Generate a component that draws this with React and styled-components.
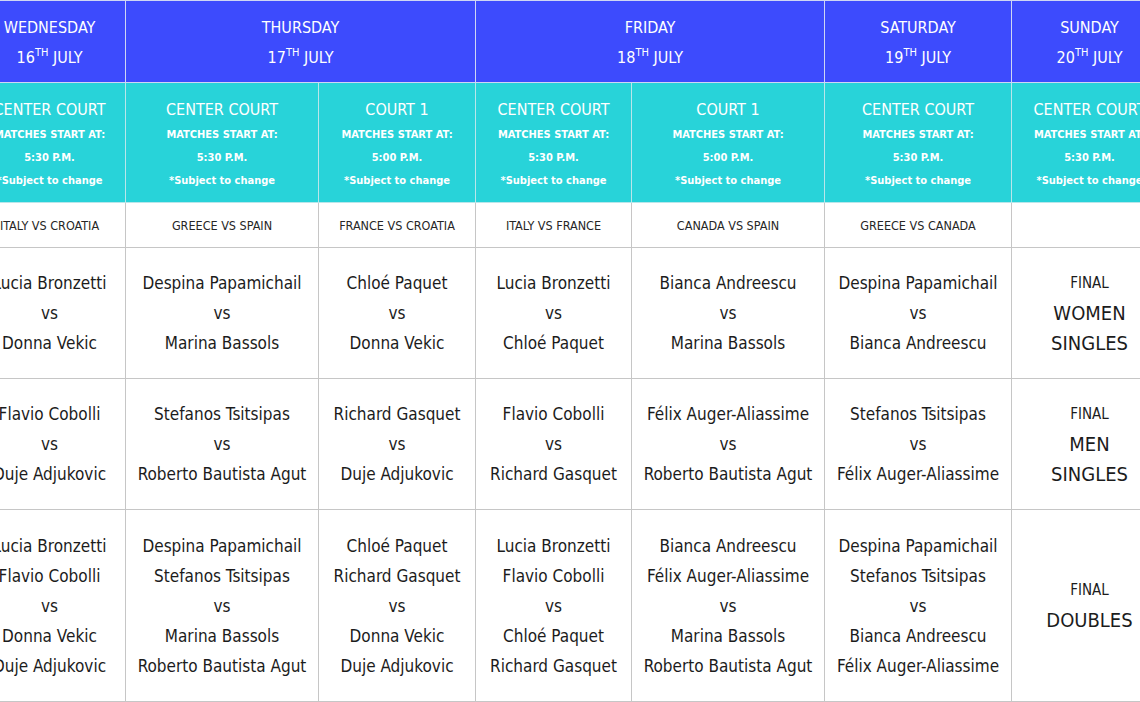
import React from "react";
import styled, { createGlobalStyle } from "styled-components";

const GlobalStyle = createGlobalStyle`
  html, body {
    margin: 0;
    padding: 0;
    background: #ffffff;
    overflow: hidden;
  }
  body {
    font-family: "Liberation Sans Narrow", "Arial Narrow", "DejaVu Sans Condensed", "Liberation Sans", sans-serif;
    font-stretch: condensed;
  }
`;

const Viewport = styled.div`
  width: 1140px;
  height: 702px;
  overflow: hidden;
`;

const Table = styled.table`
  margin-left: -27px;
  width: 1194px;
  table-layout: fixed;
  border-collapse: collapse;
  text-align: center;
`;

const Cell = styled.td`
  border: 1px solid #c6c6c6;
  padding: 0;
  vertical-align: middle;
  text-align: center;
`;

const DayCell = styled(Cell)`
  height: 79px;
  padding-top: 2px;
  background: #3d4bfd;
  color: #ffffff;
  border-color: #cfd6f4;
  font-size: 16px;
  line-height: 30px;
`;

const Sup = styled.sup`
  font-size: 11px;
  line-height: 0;
  vertical-align: 7px;
`;

const CourtCell = styled(Cell)`
  height: 115px;
  padding-top: 4px;
  background: #28d3d9;
  color: #ffffff;
  border-color: #b9e6ea;
`;

const CourtName = styled.div`
  font-size: 16px;
  line-height: 26px;
`;

const CourtNote = styled.div`
  font-size: 11px;
  line-height: 23px;
  font-weight: 700;
`;

const CountryCell = styled(Cell)`
  height: 44px;
  color: #262626;
  font-size: 12.5px;
  border-top-color: #b9e6ea;
`;

const MatchCell = styled(Cell)`
  height: ${(p) => p.$h}px;
  color: #1c1c1c;
  font-size: 17px;
  line-height: 30px;
`;

const FinalLabel = styled.div`
  font-size: 15px;
  line-height: 29px;
`;

const FinalTitle = styled.div`
  font-size: 20px;
  line-height: 30px;
`;

const widths = [152, 193, 157, 156, 193, 187, 156];

const days = [
  { name: "WEDNESDAY", num: 16, span: 1 },
  { name: "THURSDAY", num: 17, span: 2 },
  { name: "FRIDAY", num: 18, span: 2 },
  { name: "SATURDAY", num: 19, span: 1 },
  { name: "SUNDAY", num: 20, span: 1 },
];

const courts = [
  ["CENTER COURT", "5:30 P.M."],
  ["CENTER COURT", "5:30 P.M."],
  ["COURT 1", "5:00 P.M."],
  ["CENTER COURT", "5:30 P.M."],
  ["COURT 1", "5:00 P.M."],
  ["CENTER COURT", "5:30 P.M."],
  ["CENTER COURT", "5:30 P.M."],
];

const countries = [
  "ITALY VS CROATIA",
  "GREECE VS SPAIN",
  "FRANCE VS CROATIA",
  "ITALY VS FRANCE",
  "CANADA VS SPAIN",
  "GREECE VS CANADA",
  "",
];

const rows = [
  {
    h: 130,
    final: ["WOMEN", "SINGLES"],
    matches: [
      [["Lucia Bronzetti"], ["Donna Vekic"]],
      [["Despina Papamichail"], ["Marina Bassols"]],
      [["Chloé Paquet"], ["Donna Vekic"]],
      [["Lucia Bronzetti"], ["Chloé Paquet"]],
      [["Bianca Andreescu"], ["Marina Bassols"]],
      [["Despina Papamichail"], ["Bianca Andreescu"]],
    ],
  },
  {
    h: 130,
    final: ["MEN", "SINGLES"],
    matches: [
      [["Flavio Cobolli"], ["Duje Adjukovic"]],
      [["Stefanos Tsitsipas"], ["Roberto Bautista Agut"]],
      [["Richard Gasquet"], ["Duje Adjukovic"]],
      [["Flavio Cobolli"], ["Richard Gasquet"]],
      [["Félix Auger-Aliassime"], ["Roberto Bautista Agut"]],
      [["Stefanos Tsitsipas"], ["Félix Auger-Aliassime"]],
    ],
  },
  {
    h: 191,
    final: ["DOUBLES"],
    matches: [
      [["Lucia Bronzetti", "Flavio Cobolli"], ["Donna Vekic", "Duje Adjukovic"]],
      [["Despina Papamichail", "Stefanos Tsitsipas"], ["Marina Bassols", "Roberto Bautista Agut"]],
      [["Chloé Paquet", "Richard Gasquet"], ["Donna Vekic", "Duje Adjukovic"]],
      [["Lucia Bronzetti", "Flavio Cobolli"], ["Chloé Paquet", "Richard Gasquet"]],
      [["Bianca Andreescu", "Félix Auger-Aliassime"], ["Marina Bassols", "Roberto Bautista Agut"]],
      [["Despina Papamichail", "Stefanos Tsitsipas"], ["Bianca Andreescu", "Félix Auger-Aliassime"]],
    ],
  },
];

export default function App() {
  return (
    <Viewport>
      <GlobalStyle />
      <Table>
        <colgroup>
          {widths.map((w, i) => (
            <col key={i} style={{ width: w }} />
          ))}
        </colgroup>
        <tbody>
          <tr>
            {days.map((d) => (
              <DayCell key={d.name} colSpan={d.span}>
                <div>{d.name}</div>
                <div>
                  {d.num}
                  <Sup>TH</Sup> JULY
                </div>
              </DayCell>
            ))}
          </tr>
          <tr>
            {courts.map(([name, time], i) => (
              <CourtCell key={i}>
                <CourtName>{name}</CourtName>
                <CourtNote>MATCHES START AT:</CourtNote>
                <CourtNote>{time}</CourtNote>
                <CourtNote>*Subject to change</CourtNote>
              </CourtCell>
            ))}
          </tr>
          <tr>
            {countries.map((c, i) => (
              <CountryCell key={i}>{c}</CountryCell>
            ))}
          </tr>
          {rows.map((r, ri) => (
            <tr key={ri}>
              {r.matches.map(([a, b], i) => (
                <MatchCell key={i} $h={r.h}>
                  {a.map((n) => (
                    <div key={n}>{n}</div>
                  ))}
                  <div>vs</div>
                  {b.map((n) => (
                    <div key={n}>{n}</div>
                  ))}
                </MatchCell>
              ))}
              <MatchCell $h={r.h}>
                <FinalLabel>FINAL</FinalLabel>
                {r.final.map((t) => (
                  <FinalTitle key={t}>{t}</FinalTitle>
                ))}
              </MatchCell>
            </tr>
          ))}
        </tbody>
      </Table>
    </Viewport>
  );
}
